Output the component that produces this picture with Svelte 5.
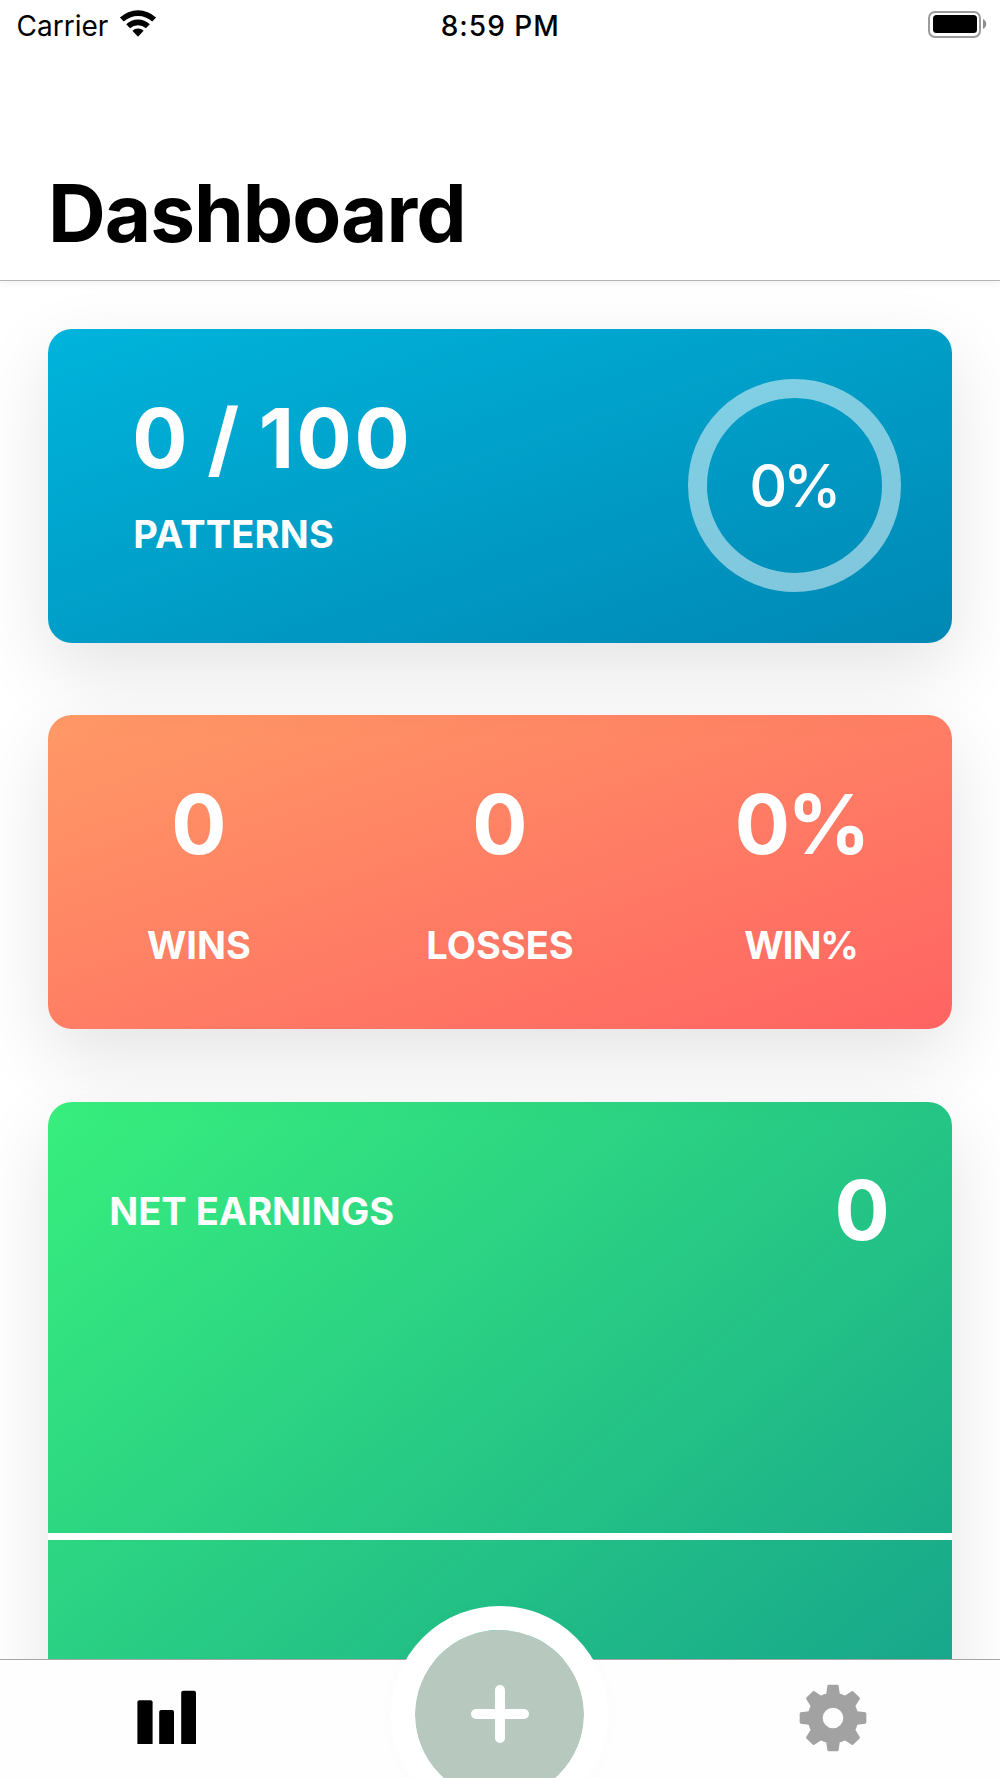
<script lang="ts">
	interface Stat {
		value: string;
		label: string;
	}

	const patterns = { done: 0, total: 100 };
	const percent = Math.round((patterns.done / patterns.total) * 100);
	const netEarnings = 0;

	const stats: Stat[] = [
		{ value: '0', label: 'WINS' },
		{ value: '0', label: 'LOSSES' },
		{ value: '0%', label: 'WIN%' },
	];

	const teeth = [0, 90, 180, 270];
</script>

<div class="screen">
	<header class="header">
		<div class="status">
			<div class="status__carrier">
				<span>Carrier</span>
				<svg width="38" height="28" viewBox="0 0 38 28" aria-hidden="true">
					<path d="M.9 7.4A26.6 26.6 0 0 1 37.1 7.4L33.2 11.6A20.8 20.8 0 0 0 4.8 11.6Z" />
					<path d="M7.2 14.2A17.2 17.2 0 0 1 30.8 14.2L26.9 18.3A11.6 11.6 0 0 0 11.1 18.3Z" />
					<path d="M13.4 20.8A8 8 0 0 1 24.6 20.8L19 26.8Z" />
				</svg>
			</div>
			<div class="status__time">8:59 PM</div>
			<div class="status__battery">
				<div class="battery"><div class="battery__level"></div></div>
				<svg width="4" height="12" viewBox="0 0 4 12" aria-hidden="true">
					<path d="M0 1Q3.2 2.6 3.2 6T0 11Z" fill="#8e8e8e" />
				</svg>
			</div>
		</div>
		<h1>Dashboard</h1>
	</header>

	<main>
		<section class="card card--patterns">
			<div class="patterns">
				<div class="value">{patterns.done} / {patterns.total}</div>
				<div class="label">PATTERNS</div>
			</div>
			<div class="ring">{percent}%</div>
		</section>

		<section class="card card--record">
			{#each stats as stat}
				<div class="stat">
					<div class="value">{stat.value}</div>
					<div class="label">{stat.label}</div>
				</div>
			{/each}
		</section>

		<section class="card card--earnings">
			<div class="earnings">
				<div class="label">NET EARNINGS</div>
				<div class="value">{netEarnings}</div>
			</div>
			<div class="chart-line"></div>
		</section>
	</main>

	<nav class="tabs">
		<button class="tab" aria-label="Dashboard">
			<svg width="60" height="54" viewBox="0 0 60 54">
				<path d="M.4 54V12.3q0-2 2-2h11.2q2 0 2 2V54Z" />
				<path d="M22.2 54V22q0-2 2-2h10.8q2 0 2 2V54Z" />
				<path d="M44.2 54V2.7q0-2 2-2h10.8q2 0 2 2V54Z" />
			</svg>
		</button>
		<button class="add" aria-label="Add">
			<svg width="58" height="58" viewBox="0 0 58 58">
				<path d="M29 5V53M5 29H53" stroke="#fff" stroke-width="10" stroke-linecap="round" />
			</svg>
		</button>
		<button class="tab" aria-label="Settings">
			<svg width="68" height="68" viewBox="-102 -102 204 204" fill="#a2a2a2">
				<path
					fill-rule="evenodd"
					d="M-76 0A76 76 0 1 0 76 0A76 76 0 1 0-76 0ZM-31 0A31 31 0 1 1 31 0A31 31 0 1 1-31 0Z"
				/>
				{#each teeth as angle}
					<g transform="rotate({angle})">
						<path d="M-21-66L-17-97Q-16-100-13-100H13Q16-100 17-97L21-66Z" />
						<path d="M34-66L56-80Q59-82 62-79L79-62Q82-59 80-56L66-34Z" />
					</g>
				{/each}
			</svg>
		</button>
	</nav>
</div>

<style>
	:global(body) {
		margin: 0;
		background: #fff;
	}

	.screen {
		display: flex;
		flex-direction: column;
		width: 1000px;
		height: 1778px;
		overflow: hidden;
		background: #fff;
		font-family: Inter, "Liberation Sans", sans-serif;
		font-feature-settings: "calt" 0;
		color: #000;
	}

	.header {
		position: relative;
		z-index: 5;
		flex: none;
		box-sizing: border-box;
		height: 281px;
		background: #fff;
		border-bottom: 1px solid #b4b4b4;
		box-shadow: 0 3px 8px rgba(0, 0, 0, 0.05);
	}

	.status {
		display: grid;
		grid-template-columns: 1fr auto 1fr;
		align-items: center;
		height: 52px;
		padding: 0 13px 0 16.5px;
		font-size: 28px;
		line-height: 52px;
	}

	.status__carrier {
		display: flex;
		align-items: center;
		gap: 11px;
	}

	.status__carrier svg {
		margin-bottom: 4px;
	}

	.status__time {
		margin-left: -3px;
		font-weight: 500;
		letter-spacing: 1px;
	}

	.status__battery {
		display: flex;
		align-items: center;
		justify-content: flex-end;
		gap: 2px;
		margin-bottom: 4px;
	}

	.battery {
		box-sizing: border-box;
		width: 53px;
		height: 27px;
		padding: 2.5px;
		border: 2px solid #9b9b9b;
		border-radius: 7px;
	}

	.battery__level {
		height: 100%;
		background: #000;
		border-radius: 3.5px;
	}

	h1 {
		margin: 111px 0 0 48px;
		font-size: 80px;
		font-weight: 700;
		line-height: 100px;
		letter-spacing: -1px;
	}

	main {
		flex: 1;
		display: flex;
		flex-direction: column;
		gap: 72.5px;
		min-height: 0;
		padding: 47.5px 48.3px 0;
	}

	.card {
		position: relative;
		flex: none;
		display: flex;
		box-sizing: border-box;
		height: 314px;
		border-radius: 24px;
		box-shadow: 0 27px 76px rgba(0, 0, 0, 0.11);
		color: #fff;
	}

	.card--patterns {
		z-index: 3;
		justify-content: space-between;
		padding: 50px 50.5px 0 84px;
		background: linear-gradient(to bottom right, #00b4db, #0083b0 110%);
	}

	.card--record {
		z-index: 2;
		padding-top: 50px;
		background: linear-gradient(to bottom right, #ff9966, #ff5e62 110%);
	}

	.card--earnings {
		z-index: 1;
		flex-direction: column;
		height: 750px;
		background: linear-gradient(to bottom right, #38ef7d, #11998e 104%);
	}

	.value {
		font-size: 82px;
		font-weight: 700;
		line-height: 119px;
	}

	.label {
		font-size: 38px;
		font-weight: 700;
		line-height: 46px;
	}

	.patterns .value {
		letter-spacing: 2.6px;
		word-spacing: -5px;
	}

	.patterns .label {
		margin: 13px 0 0 1px;
		letter-spacing: 0.2px;
	}

	.ring {
		display: grid;
		place-items: center;
		box-sizing: border-box;
		width: 213px;
		height: 213px;
		border: 19.5px solid rgba(255, 255, 255, 0.5);
		border-radius: 50%;
		font-size: 59px;
		font-weight: 500;
		letter-spacing: -4.5px;
		text-indent: -3px;
	}

	.stat {
		flex: 1;
		text-align: center;
	}

	.stat .label {
		margin-top: 38px;
	}

	.stat:last-child .value {
		letter-spacing: -3px;
	}

	.stat:last-child .label {
		letter-spacing: -1px;
	}

	.earnings {
		display: flex;
		align-items: center;
		justify-content: space-between;
		height: 118px;
		padding: 50px 62px 0 61px;
	}

	.chart-line {
		height: 7px;
		margin-top: 263px;
		background: #fff;
	}

	.tabs {
		position: relative;
		z-index: 6;
		flex: none;
		display: grid;
		grid-template-columns: 1fr 1fr 1fr;
		box-sizing: border-box;
		height: 119px;
		background: #fefefe;
		border-top: 1px solid #a5a5a5;
	}

	button {
		padding: 0;
		border: 0;
		background: none;
	}

	.tab {
		display: flex;
		justify-content: center;
		align-items: flex-start;
	}

	.tab:first-child svg {
		margin-top: 30px;
	}

	.tab:last-child svg {
		margin-top: 23.5px;
	}

	.add {
		display: grid;
		place-items: center;
		justify-self: center;
		box-sizing: border-box;
		width: 217px;
		height: 217px;
		margin-top: -54.5px;
		border: 24px solid #fff;
		border-radius: 50%;
		background: #b7c8be;
		background-clip: padding-box;
		box-shadow: 0 0 40px rgba(0, 0, 0, 0.01);
	}
</style>
